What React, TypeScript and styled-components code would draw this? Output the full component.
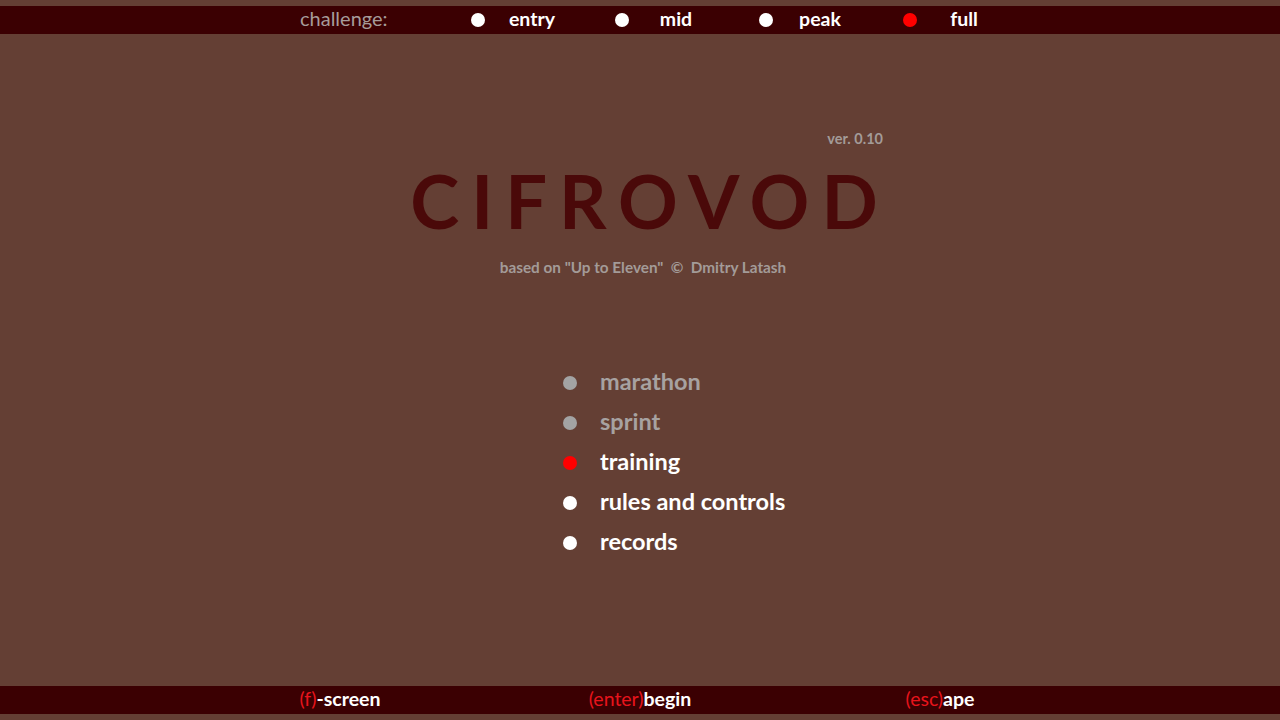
import React from 'react';
import styled, { createGlobalStyle } from 'styled-components';

const GlobalStyle = createGlobalStyle`
	html, body {
		margin: 0;
		padding: 0;
		background: #643f34;
	}
	body {
		font-family: Lato, 'Noto Sans', sans-serif;
	}
`;

const Page = styled.div`
	width: 1280px;
	height: 720px;
	box-sizing: border-box;
	padding: 6px 0;
	display: flex;
	flex-direction: column;
	background: #643f34;
	overflow: hidden;
`;

const Bar = styled.div`
	height: 28px;
	flex: 0 0 28px;
	box-sizing: border-box;
	padding-bottom: 4px;
	background: #3b0002;
	display: flex;
	align-items: center;
	font-size: 19.5px;
	font-weight: 700;
	color: #ffffff;
`;

const ChallengeRow = styled(Bar)`
	padding-left: 300px;
`;

const ChallengeLabel = styled.div`
	width: 171px;
	color: #a69c9a;
	font-weight: 400;
	font-size: 20px;
`;

const Option = styled.div`
	width: 144px;
	display: flex;
	align-items: center;
`;

const Dot = styled.span<{ $color: string }>`
	width: 14px;
	height: 14px;
	border-radius: 50%;
	background: ${(p) => p.$color};
	flex: 0 0 14px;
`;

const BarDot = styled(Dot)`
	margin-top: 4px;
`;

const OptionText = styled.span`
	width: 80px;
	margin-left: 7px;
	text-align: center;
`;

const KeysRow = styled(Bar)`
	justify-content: center;
`;

const KeyCell = styled.div`
	width: 300px;
	text-align: center;
`;

const Key = styled.span`
	color: #e8141c;
	font-weight: 400;
`;

const Main = styled.main`
	flex: 1;
	display: flex;
	flex-direction: column;
	align-items: center;
`;

const Version = styled.div`
	width: 486px;
	margin-top: 96px;
	text-align: right;
	font-size: 14.5px;
	font-weight: 700;
	color: #a39b98;
`;

const Title = styled.h1`
	margin: 14px 0 0 0;
	padding-left: 20px;
	font-size: 74px;
	line-height: 80px;
	font-weight: 700;
	letter-spacing: 12px;
	color: #4a0909;
`;

const Credit = styled.div`
	margin-top: 17px;
	padding-left: 6px;
	font-size: 15.3px;
	font-weight: 700;
	color: #a39b98;
`;

const Menu = styled.ul`
	list-style: none;
	margin: 85px auto 0;
	padding: 0 0 0 73px;
	width: 300px;
	box-sizing: border-box;
	display: flex;
	flex-direction: column;
`;

const MenuItem = styled.li<{ $disabled?: boolean }>`
	height: 40px;
	display: flex;
	align-items: center;
	font-size: 23.5px;
	font-weight: 700;
	color: ${(p) => (p.$disabled ? '#a7a2a1' : '#ffffff')};
`;

const MenuDot = styled(Dot)`
	margin-top: 3px;
`;

const MenuText = styled.span`
	margin-left: 23px;
`;

const challenges = [
	{ label: 'entry', active: false },
	{ label: 'mid', active: false },
	{ label: 'peak', active: false },
	{ label: 'full', active: true }
];

const menu = [
	{ label: 'marathon', disabled: true, active: false },
	{ label: 'sprint', disabled: true, active: false },
	{ label: 'training', disabled: false, active: true },
	{ label: 'rules and controls', disabled: false, active: false },
	{ label: 'records', disabled: false, active: false }
];

const dotColor = (active: boolean, disabled?: boolean) => (active ? '#ff0000' : disabled ? '#a3a3a3' : '#ffffff');

export default function App() {
	return (
		<Page>
			<GlobalStyle />
			<ChallengeRow>
				<ChallengeLabel>challenge:</ChallengeLabel>
				{challenges.map((c) => (
					<Option key={c.label}>
						<BarDot $color={dotColor(c.active)} />
						<OptionText>{c.label}</OptionText>
					</Option>
				))}
			</ChallengeRow>
			<Main>
				<Version>ver. 0.10</Version>
				<Title>CIFROVOD</Title>
				<Credit>based on "Up to Eleven" &nbsp;©&nbsp; Dmitry Latash</Credit>
				<Menu>
					{menu.map((m) => (
						<MenuItem key={m.label} $disabled={m.disabled}>
							<MenuDot $color={dotColor(m.active, m.disabled)} />
							<MenuText>{m.label}</MenuText>
						</MenuItem>
					))}
				</Menu>
			</Main>
			<KeysRow>
				<KeyCell>
					<Key>(f)</Key>-screen
				</KeyCell>
				<KeyCell>
					<Key>(enter)</Key>begin
				</KeyCell>
				<KeyCell>
					<Key>(esc)</Key>ape
				</KeyCell>
			</KeysRow>
		</Page>
	);
}
